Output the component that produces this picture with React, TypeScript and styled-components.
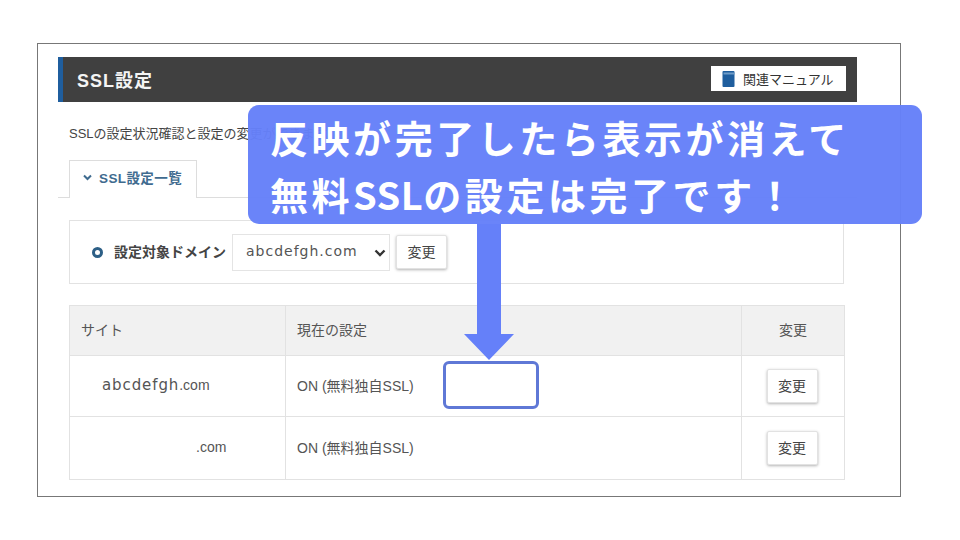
import React from "react";
import styled, { createGlobalStyle } from "styled-components";

const uiFont = `"Liberation Sans", "Noto Sans CJK JP", sans-serif`;
const accent = "#6580f9";

const GlobalStyle = createGlobalStyle`
  html, body {
    margin: 0;
    padding: 0;
    background: #fff;
  }
`;

const Page = styled.div`
  position: relative;
  width: 960px;
  height: 540px;
  overflow: hidden;
  box-sizing: border-box;
  padding: 43px 59px 43px 37px;
  background: #fff;
  font-family: ${uiFont};
  color: #444;
`;

const Frame = styled.div`
  box-sizing: border-box;
  height: 454px;
  border: 1px solid #777;
  padding: 13px 43px 0 20px;
`;

const Header = styled.header`
  display: flex;
  align-items: center;
  justify-content: space-between;
  box-sizing: border-box;
  height: 45px;
  padding: 0 11px 0 14px;
  background: #404040;
  border-left: 5px solid #1f5e9e;
`;

const Title = styled.h1`
  margin: 0 0 1px;
  font-size: 18px;
  font-weight: 700;
  letter-spacing: 1px;
  color: #f4f4f4;
`;

const ManualLink = styled.a`
  display: flex;
  align-items: center;
  gap: 8px;
  box-sizing: border-box;
  width: 135px;
  height: 25px;
  margin-bottom: 2px;
  padding-left: 11px;
  background: #fff;
  font-size: 13px;
  color: #333;
`;

const Body = styled.div`
  padding: 0 13px 0 11px;
`;

const Description = styled.p`
  margin: 0;
  padding-top: 23px;
  height: 35px;
  font-size: 13px;
  line-height: 17px;
  color: #444;
`;

const TabBar = styled.div`
  margin: 0 -13px 0 -11px;
  padding: 0 0 0 11px;
  border-bottom: 1px solid #ddd;
  height: 37px;
`;

const Tab = styled.div`
  display: flex;
  align-items: center;
  gap: 7px;
  box-sizing: border-box;
  width: 128px;
  height: 38px;
  padding: 0 0 5px 13px;
  background: #fff;
  border: 1px solid #ddd;
  border-bottom: none;
  font-size: 13.5px;
  font-weight: 700;
  letter-spacing: 0.4px;
  color: #3f6b8f;
`;

const DomainPanel = styled.div`
  display: flex;
  align-items: center;
  box-sizing: border-box;
  height: 64px;
  margin-top: 22px;
  padding-left: 22px;
  border: 1px solid #e2e2e2;
`;

const Dot = styled.span`
  box-sizing: border-box;
  width: 11px;
  height: 11px;
  margin-right: 11px;
  border: 3px solid #2d5f86;
  border-radius: 50%;
`;

const DomainLabel = styled.span`
  width: 118px;
  margin-bottom: 2px;
  font-size: 14px;
  font-weight: 700;
  white-space: nowrap;
  color: #444;
`;

const SelectBox = styled.div`
  position: relative;
  width: 158px;
  height: 37px;
  margin-right: 6px;
`;

const DomainSelect = styled.select`
  box-sizing: border-box;
  width: 100%;
  height: 100%;
  padding: 0 0 2px 13px;
  appearance: none;
  background: #fff;
  border: 1px solid #e4e4e4;
  border-radius: 0;
  font-family: "DejaVu Sans", sans-serif;
  font-size: 14px;
  letter-spacing: 1px;
  color: #555;
`;

const SelectChevron = styled.svg`
  position: absolute;
  right: 4px;
  top: 15px;
  pointer-events: none;
`;

const ChangeButton = styled.button`
  box-sizing: border-box;
  width: 51px;
  height: 34px;
  padding: 0 0 2px;
  background: #fff;
  border: 1px solid #e2e2e2;
  border-radius: 2px;
  box-shadow: 0 1px 3px rgba(0, 0, 0, 0.3);
  font-family: ${uiFont};
  font-size: 14px;
  color: #444;
`;

const Table = styled.table`
  width: 775px;
  margin-top: 21px;
  border-collapse: collapse;
  table-layout: fixed;
  font-size: 14px;
  color: #555;
`;

const HeadCell = styled.th<{ $center?: boolean }>`
  box-sizing: border-box;
  height: 50px;
  padding: 0 0 4px ${(p) => (p.$center ? 0 : 11)}px;
  background: #f1f1f1;
  border: 1px solid #e2e2e2;
  font-weight: 400;
  text-align: ${(p) => (p.$center ? "center" : "left")};
`;

const Cell = styled.td<{ $indent?: number }>`
  padding: 0 0 3px ${(p) => p.$indent ?? 11}px;
  border: 1px solid #e2e2e2;
`;

const ActionCell = styled.td`
  padding: 0 2px 1px 0;
  border: 1px solid #e2e2e2;
  text-align: center;
`;

const Row = styled.tr<{ $height: number }>`
  height: ${(p) => p.$height}px;
`;

const SiteName = styled.span`
  font-family: "DejaVu Sans", sans-serif;
  font-size: 15px;
  letter-spacing: 0.9px;
`;

const Callout = styled.div`
  position: absolute;
  left: 248px;
  top: 105px;
  box-sizing: border-box;
  width: 674px;
  height: 119px;
  padding: 3px 0 0 22px;
  background: rgba(101, 128, 249, 0.97);
  border-radius: 11px;
  font-family: "Noto Sans CJK JP", sans-serif;
  font-size: 38px;
  font-weight: 700;
  line-height: 57px;
  letter-spacing: 3.55px;
  color: #fff;
  white-space: nowrap;
`;

const CalloutLatin = styled.span`
  letter-spacing: 0.5px;
`;

const Arrow = styled.svg`
  position: absolute;
  left: 464px;
  top: 224px;
`;

const Highlight = styled.div`
  position: absolute;
  left: 443px;
  top: 361px;
  box-sizing: border-box;
  width: 96px;
  height: 48px;
  background: #fff;
  border: 3px solid #5f78d6;
  border-radius: 6px;
`;

const BookIcon = () => (
  <svg width="13" height="16" viewBox="0 0 13 16">
    <rect x="0.5" y="0" width="12" height="16" rx="1" fill="#1f5e9e" />
    <rect x="1.5" y="1.5" width="11" height="2" fill="#6f9cc8" />
  </svg>
);

const TabChevron = () => (
  <svg width="9" height="7" viewBox="0 0 9 7">
    <path d="M1 1.5 L4.5 5 L8 1.5" fill="none" stroke="#3f6b8f" strokeWidth="2" />
  </svg>
);

const rows = [
  { indent: 32, name: "abcdefgh", height: 61 },
  { indent: 126, name: "", height: 63 },
];

const App = () => (
  <Page>
    <GlobalStyle />
    <Frame>
      <Header>
        <Title>SSL設定</Title>
        <ManualLink>
          <BookIcon />
          関連マニュアル
        </ManualLink>
      </Header>
      <Body>
        <Description>SSLの設定状況確認と設定の変更ができます。</Description>
        <TabBar>
          <Tab>
            <TabChevron />
            SSL設定一覧
          </Tab>
        </TabBar>
        <DomainPanel>
          <Dot />
          <DomainLabel>設定対象ドメイン</DomainLabel>
          <SelectBox>
            <DomainSelect defaultValue="abcdefgh.com">
              <option>abcdefgh.com</option>
            </DomainSelect>
            <SelectChevron width="12" height="8" viewBox="0 0 12 8">
              <path d="M1.5 1.5 L6 6 L10.5 1.5" fill="none" stroke="#333" strokeWidth="2.4" />
            </SelectChevron>
          </SelectBox>
          <ChangeButton>変更</ChangeButton>
        </DomainPanel>
        <Table>
          <colgroup>
            <col width="216" />
            <col width="456" />
            <col width="103" />
          </colgroup>
          <thead>
            <tr>
              <HeadCell>サイト</HeadCell>
              <HeadCell>現在の設定</HeadCell>
              <HeadCell $center>変更</HeadCell>
            </tr>
          </thead>
          <tbody>
            {rows.map((row) => (
              <Row key={row.indent} $height={row.height}>
                <Cell $indent={row.indent}>
                  <SiteName>{row.name}</SiteName>.com
                </Cell>
                <Cell>ON (無料独自SSL)</Cell>
                <ActionCell>
                  <ChangeButton>変更</ChangeButton>
                </ActionCell>
              </Row>
            ))}
          </tbody>
        </Table>
      </Body>
    </Frame>
    <Arrow width="50" height="136" viewBox="0 0 50 136">
      <path d="M13 0 H37 V110 H50 L25 136 L0 110 H13 Z" fill={accent} />
    </Arrow>
    <Highlight />
    <Callout>
      反映が完了したら表示が消えて
      <br />
      無料<CalloutLatin>SSL</CalloutLatin>の設定は完了です！
    </Callout>
  </Page>
);

export default App;
